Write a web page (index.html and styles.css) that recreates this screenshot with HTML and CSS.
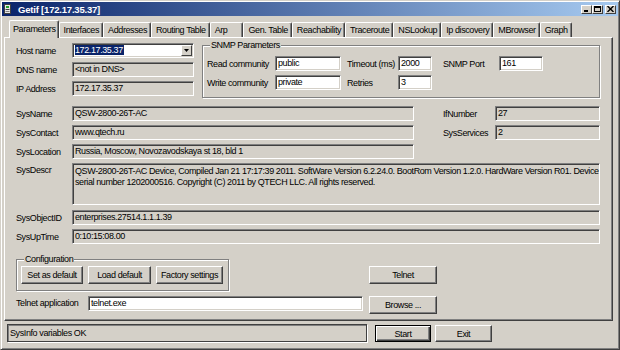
FILE: index.html
```html
<!DOCTYPE html>
<html lang="en">
<head>
  <meta charset="UTF-8">
  <title>Getif [172.17.35.37]</title>
  <link rel="stylesheet" href="styles.css">
</head>
<body>

  <div class="window">
    <div class="titlebar">
      <svg class="app-icon" width="7" height="10" viewBox="0 0 7 10">
        <rect x="0.5" y="0.5" width="6" height="9" fill="#e8e8e8" stroke="#404040"/>
        <rect x="2" y="2" width="3" height="2" fill="#22a02a"/>
        <line x1="1.5" y1="5.5" x2="5.5" y2="5.5" stroke="#404040"/>
        <line x1="1.5" y1="7.5" x2="5.5" y2="7.5" stroke="#808080"/>
      </svg>
      <span class="title">Getif [172.17.35.37]</span>
      <div class="caption-buttons">
        <span class="cbtn">
          <svg width="7" height="6" viewBox="0 0 7 6"><rect x="1" y="4" width="4" height="2" fill="#000"/></svg>
        </span>
        <span class="cbtn">
          <svg width="7" height="6" viewBox="0 0 7 6"><rect x="0.5" y="0.5" width="6" height="5" fill="none" stroke="#000"/><rect x="0" y="0" width="7" height="2" fill="#000"/></svg>
        </span>
        <span class="cbtn close">
          <svg width="7" height="6" viewBox="0 0 7 6"><path d="M0.5 0 L6.5 6 M6.5 0 L0.5 6" stroke="#000" stroke-width="1.4"/></svg>
        </span>
      </div>
    </div>

    <div class="tabs">
      <span class="tab active">Parameters</span>
      <span class="tab">Interfaces</span>
      <span class="tab">Addresses</span>
      <span class="tab">Routing Table</span>
      <span class="tab wide">Arp</span>
      <span class="tab">Gen. Table</span>
      <span class="tab">Reachability</span>
      <span class="tab">Traceroute</span>
      <span class="tab">NSLookup</span>
      <span class="tab">Ip discovery</span>
      <span class="tab">MBrowser</span>
      <span class="tab">Graph</span>
    </div>

    <div class="panel">
      <div class="top">
        <div class="host">
          <div class="row">
            <span class="lbl">Host name</span>
            <div class="combo">
              <span class="combo-text"><span class="sel">172.17.35.37</span></span>
              <span class="combo-btn">
                <svg width="5" height="3" viewBox="0 0 5 3"><path d="M0 0 H5 L2.5 3 Z" fill="#000"/></svg>
              </span>
            </div>
          </div>
          <div class="row">
            <span class="lbl">DNS name</span>
            <div class="field w122">&lt;not in DNS&gt;</div>
          </div>
          <div class="row">
            <span class="lbl">IP Address</span>
            <div class="field w122">172.17.35.37</div>
          </div>
        </div>

        <div class="group snmp">
          <div class="group-title">SNMP Parameters</div>
          <div class="row">
            <span class="lbl-comm">Read community</span>
            <div class="edit w66">public</div>
            <span class="lbl-timeout">Timeout (ms)</span>
            <div class="edit w34">2000</div>
            <span class="lbl-port">SNMP Port</span>
            <div class="edit w44">161</div>
          </div>
          <div class="row">
            <span class="lbl-comm">Write community</span>
            <div class="edit w66">private</div>
            <span class="lbl-timeout">Retries</span>
            <div class="edit w34">3</div>
          </div>
        </div>
      </div>

      <div class="row">
        <span class="lbl">SysName</span>
        <div class="field w342">QSW-2800-26T-AC</div>
        <span class="lbl-right">IfNumber</span>
        <div class="field w105">27</div>
      </div>
      <div class="row">
        <span class="lbl">SysContact</span>
        <div class="field w342">www.qtech.ru</div>
        <span class="lbl-right">SysServices</span>
        <div class="field w105">2</div>
      </div>
      <div class="row">
        <span class="lbl">SysLocation</span>
        <div class="field w342">Russia, Moscow, Novozavodskaya st 18, bld 1</div>
      </div>
      <div class="row tall">
        <span class="lbl">SysDescr</span>
        <div class="field multi w528">QSW-2800-26T-AC Device, Compiled Jan 21 17:17:39 2011. SoftWare Version 6.2.24.0. BootRom Version 1.2.0. HardWare Version R01. Device<br>serial number 1202000516. Copyright (C) 2011 by QTECH LLC. All rights reserved.</div>
      </div>
      <div class="row">
        <span class="lbl">SysObjectID</span>
        <div class="field w528">enterprises.27514.1.1.1.39</div>
      </div>
      <div class="row">
        <span class="lbl">SysUpTime</span>
        <div class="field w528">0:10:15:08.00</div>
      </div>

      <div class="config-row">
        <div class="group config">
          <div class="group-title">Configuration</div>
          <div class="btn-row">
            <button class="btn w62">Set as default</button>
            <button class="btn w63">Load default</button>
            <button class="btn w67">Factory settings</button>
          </div>
        </div>
        <button class="btn w68 telnet">Telnet</button>
      </div>

      <div class="telnet-row">
        <span class="lbl-app">Telnet application</span>
        <div class="edit w275">telnet.exe</div>
        <button class="btn w68 browse">Browse ...</button>
      </div>
    </div>

    <div class="statusbar">
      <div class="status">SysInfo variables OK</div>
      <button class="btn default w56">Start</button>
      <button class="btn w57">Exit</button>
    </div>
  </div>

</body>
</html>
```

FILE: styles.css
```css
body {
  margin: 0;
  font-family: "Liberation Sans", Arial, sans-serif;
  font-size: 9px;
  letter-spacing: -0.4px;
  color: #000;
  background-color: #d4d0c8;
}

.window {
  width: 620px;
  height: 350px;
  box-sizing: border-box;
  border: 1px solid;
  border-color: #d4d0c8 #404040 #404040 #d4d0c8;
  box-shadow: inset 1px 1px #fff, inset -1px -1px #808080;
  padding: 1px;
  background-color: #d4d0c8;
}

/* title bar */
.titlebar {
  height: 14px;
  display: flex;
  align-items: center;
  padding: 0 2px 0 2px;
  background: linear-gradient(to right, #0a246a, #a6caf0);
}

.app-icon {
  margin-right: 7px;
}

.title {
  flex: 1;
  color: #fff;
  font-weight: bold;
  font-size: 9.5px;
  letter-spacing: -0.2px;
}

.caption-buttons {
  display: flex;
}

.cbtn {
  width: 11px;
  height: 9px;
  box-sizing: border-box;
  display: flex;
  align-items: center;
  justify-content: center;
  background-color: #d4d0c8;
  border: 1px solid;
  border-color: #fff #404040 #404040 #fff;
}

.cbtn.close {
  margin-left: 2px;
}

/* tabs */
.tabs {
  display: flex;
  align-items: flex-end;
  height: 17px;
  margin-top: 4px;
  padding-left: 7px;
}

.tab {
  height: 15px;
  box-sizing: border-box;
  padding: 0 3px 0 4px;
  line-height: 14px;
  border: 1px solid;
  border-bottom: none;
  border-color: #fff #404040 #404040 #fff;
  border-radius: 2px 2px 0 0;
  box-shadow: inset -1px 0 #808080;
}

.tab.active {
  height: 18px;
  margin-bottom: -1px;
  padding: 1px 2px 0 3px;
  position: relative;
  z-index: 1;
  background-color: #d4d0c8;
}

.tab.wide {
  padding-right: 15px;
}

/* panel */
.panel {
  height: 284px;
  box-sizing: border-box;
  margin: 0 5px 0 2px;
  padding: 5px 0 0 11px;
  border: 1px solid;
  border-color: #fff #404040 #404040 #fff;
  box-shadow: inset -1px -1px #808080;
}

.top {
  display: flex;
  margin-bottom: 6px;
}

.host {
  width: 186px;
}

.row {
  display: flex;
  align-items: center;
  height: 15px;
  margin-bottom: 4px;
}

.row.tall {
  height: 42px;
  align-items: flex-start;
  margin-bottom: 5px;
}

.row.tall .lbl {
  padding-top: 2px;
}

.lbl {
  width: 56px;
  flex: none;
}

.lbl-right {
  width: 52px;
  margin-left: 29px;
}

.field,
.edit,
.combo {
  height: 15px;
  box-sizing: border-box;
  border: 1px solid;
  border-color: #808080 #fff #fff #808080;
  box-shadow: inset 1px 1px #404040, inset -1px -1px #d4d0c8;
  padding: 0 2px;
  line-height: 13px;
  white-space: nowrap;
  overflow: hidden;
}

.field {
  background-color: #d4d0c8;
}

.edit,
.combo {
  background-color: #fff;
}

.field.multi {
  height: 42px;
  padding-top: 2px;
  line-height: 11px;
}

.w34 { width: 34px; }
.w44 { width: 44px; }
.w66 { width: 66px; }
.w105 { width: 105px; }
.w122 { width: 122px; }
.w275 { width: 275px; }
.w342 { width: 342px; }
.w528 { width: 528px; }

/* combo box */
.combo {
  width: 122px;
  display: flex;
  padding: 1px 1px 1px 2px;
}

.combo-text {
  flex: 1;
  line-height: 11px;
}

.sel {
  background-color: #0a246a;
  color: #fff;
  padding-right: 1px;
}

.combo-btn {
  width: 11px;
  box-sizing: border-box;
  display: flex;
  align-items: center;
  justify-content: center;
  background-color: #d4d0c8;
  border: 1px solid;
  border-color: #fff #404040 #404040 #fff;
}

/* group boxes */
.group {
  box-sizing: border-box;
  border: 1px solid #808080;
  box-shadow: inset 1px 1px #fff, 1px 1px #fff;
}

.group-title {
  width: fit-content;
  margin: -7px 0 0 3px;
  padding: 0 1px;
  line-height: 12px;
  background-color: #d4d0c8;
}

.snmp {
  width: 398px;
  height: 53px;
  margin-top: 2px;
  padding-left: 4px;
}

.snmp .group-title {
  margin-bottom: 5px;
  margin-left: 3px;
}

.lbl-comm { width: 68px; }
.lbl-timeout { width: 51px; margin-left: 6px; }
.lbl-port { width: 56px; margin-left: 11px; }

/* bottom part */
.config-row {
  display: flex;
  align-items: flex-start;
  margin-top: 15px;
}

.config {
  width: 213px;
  height: 32px;
  padding-left: 4px;
}

.config .group-title {
  margin-bottom: 1px;
}

.btn-row {
  display: flex;
  gap: 5px;
}

.btn {
  height: 18px;
  box-sizing: border-box;
  padding: 0;
  font-family: inherit;
  font-size: 9px;
  letter-spacing: -0.4px;
  color: #000;
  background-color: #d4d0c8;
  border: 1px solid;
  border-color: #fff #404040 #404040 #fff;
  box-shadow: inset -1px -1px #808080;
}

.btn.default {
  border: 1px solid #000;
  box-shadow: inset 1px 1px #fff, inset -1px -1px #404040, inset -2px -2px #808080;
}

.w56 { width: 56px; }
.w57 { width: 57px; }
.w62 { width: 62px; }
.w63 { width: 63px; }
.w67 { width: 67px; }
.w68 { width: 68px; }

.telnet {
  margin-top: 7px;
  margin-left: 140px;
}

.telnet-row {
  display: flex;
  align-items: flex-start;
  margin-top: 5px;
}

.lbl-app {
  width: 72px;
  line-height: 15px;
}

.browse {
  margin-left: 6px;
}

/* status line */
.statusbar {
  display: flex;
  align-items: flex-start;
  margin: 3px 0 0 5px;
}

.status {
  width: 360px;
  height: 18px;
  box-sizing: border-box;
  padding-left: 2px;
  line-height: 16px;
  border: 1px solid #404040;
  box-shadow: inset 1px 1px #808080, 1px 1px #fff;
}

.statusbar .default {
  margin: 1px 0 0 8px;
  height: 17px;
}

.statusbar .w57 {
  margin: 1px 0 0 4px;
  height: 17px;
}
```
